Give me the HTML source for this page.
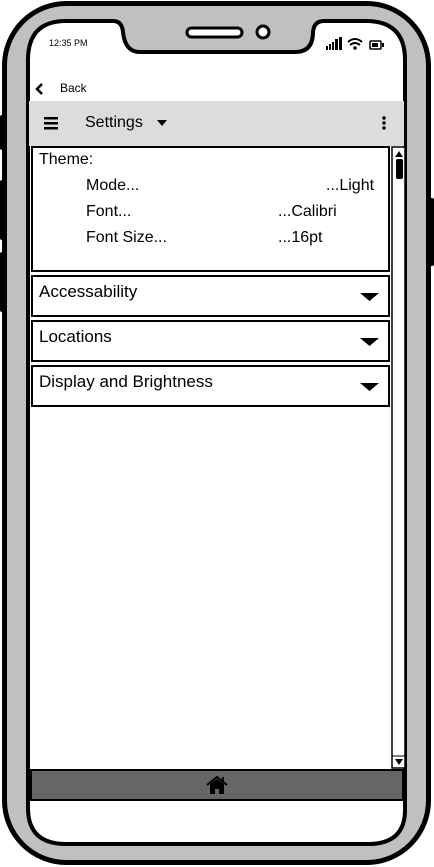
<!DOCTYPE html>
<html><head><meta charset="utf-8"><style>
html,body{margin:0;padding:0;width:434px;height:867px;overflow:hidden;background:#fff;font-family:"Liberation Sans",sans-serif;}
.a{position:absolute;}
</style></head><body>
<svg class="a" style="left:0;top:0" width="434" height="867">
<rect x="0" y="115" width="6" height="35" rx="2" fill="#000"/>
<rect x="0" y="180" width="6" height="60" rx="2" fill="#000"/>
<rect x="0" y="252" width="6" height="60" rx="2" fill="#000"/>
<rect x="428" y="198" width="6" height="68" rx="2" fill="#000"/>
<rect x="4.5" y="3.5" width="424" height="859" rx="62" fill="#c0c0c0" stroke="#000" stroke-width="5"/>
<path d="M66 21 H113 Q122 21 123 32 Q125 52 140 52 H295 Q313 52 313 32 Q314 21 324 21 H366 Q405 21 405 60 V810 Q405 844 368 844 H66 Q28 844 28 808 V60 Q28 21 66 21 Z" fill="#fff" stroke="#000" stroke-width="4"/>
<rect x="187" y="28" width="55" height="9" rx="4.5" fill="#fff" stroke="#000" stroke-width="3"/>
<ellipse cx="263" cy="32" rx="6" ry="6" fill="#fff" stroke="#000" stroke-width="3"/>
<rect x="326" y="46" width="2" height="4" fill="#000"/><rect x="329" y="44" width="2" height="6" fill="#000"/><rect x="332" y="42" width="2" height="8" fill="#000"/><rect x="335" y="39" width="3" height="11" fill="#000"/><rect x="339" y="37" width="3" height="13" fill="#000"/>
<path d="M348 42 Q355 36 362 42 M350 45 Q355 41 360 45" fill="none" stroke="#000" stroke-width="2"/><circle cx="355" cy="48" r="1.8" fill="#000"/>
<rect x="370" y="41" width="11" height="8" rx="1" fill="#fff" stroke="#000" stroke-width="1.5"/><rect x="372" y="43" width="6" height="4" fill="#000"/><rect x="382" y="43" width="2" height="4" fill="#000"/>
<path d="M42 84 L37 89 L42 94" fill="none" stroke="#000" stroke-width="2.5"/>
<rect x="29" y="101" width="375" height="45" fill="#dcdcdc"/>
<rect x="44" y="117" width="14" height="2.5" fill="#000"/><rect x="44" y="122" width="14" height="2.5" fill="#000"/><rect x="44" y="127" width="14" height="2.5" fill="#000"/>
<path d="M157 120 H167 L162 126 Z" fill="#000"/>
<circle cx="384" cy="118" r="1.7" fill="#000"/><circle cx="384" cy="123" r="1.7" fill="#000"/><circle cx="384" cy="128" r="1.7" fill="#000"/>
<rect x="32" y="147" width="357" height="124" fill="#fff" stroke="#000" stroke-width="2"/>
<rect x="392" y="147" width="13" height="621" fill="#fff" stroke="#000" stroke-width="1.5"/>
<path d="M395 157 L399 151 L403 157 Z" fill="#000"/>
<rect x="396" y="159" width="7" height="20" rx="2" fill="#000"/>
<path d="M395 759 L399 765 L403 759 Z" fill="#000"/>
<line x1="392" y1="756" x2="405" y2="756" stroke="#000"/>
<rect x="32" y="276" width="357" height="40" fill="#fff" stroke="#000" stroke-width="2"/>
<rect x="32" y="321" width="357" height="40" fill="#fff" stroke="#000" stroke-width="2"/>
<rect x="32" y="366" width="357" height="40" fill="#fff" stroke="#000" stroke-width="2"/>
<path d="M360 293 H379 L369.5 301 Z" fill="#000"/>
<path d="M360 338 H379 L369.5 346 Z" fill="#000"/>
<path d="M360 383 H379 L369.5 391 Z" fill="#000"/>
<rect x="31" y="770" width="372" height="30" fill="#666" stroke="#000" stroke-width="2"/>
<path d="M207 785 L217 777 L227 785" fill="none" stroke="#000" stroke-width="2"/>
<path d="M210 784 L217 779 L224 784 V794 H219 V789 H215 V794 H210 Z" fill="#000"/>
<rect x="222" y="777" width="2" height="5" fill="#000"/>
</svg>
<div class="a" style="left:49px;top:38px;font-size:9px">12:35 PM</div>
<div class="a" style="left:60px;top:81px;font-size:12px">Back</div>
<div class="a" style="left:85px;top:114px;font-size:16px">Settings</div>
<div class="a" style="left:39px;top:151px;font-size:16px">Theme:</div>
<div class="a" style="left:86px;top:177px;font-size:16px">Mode...</div>
<div class="a" style="left:86px;top:203px;font-size:16px">Font...</div>
<div class="a" style="left:86px;top:229px;font-size:16px">Font Size...</div>
<div class="a" style="left:326px;top:177px;font-size:16px">...Light</div>
<div class="a" style="left:278px;top:203px;font-size:16px">...Calibri</div>
<div class="a" style="left:278px;top:229px;font-size:16px">...16pt</div>
<div class="a" style="left:39px;top:282px;font-size:17px">Accessability</div>
<div class="a" style="left:39px;top:327px;font-size:17px">Locations</div>
<div class="a" style="left:39px;top:372px;font-size:17px">Display and Brightness</div>
</body></html>
